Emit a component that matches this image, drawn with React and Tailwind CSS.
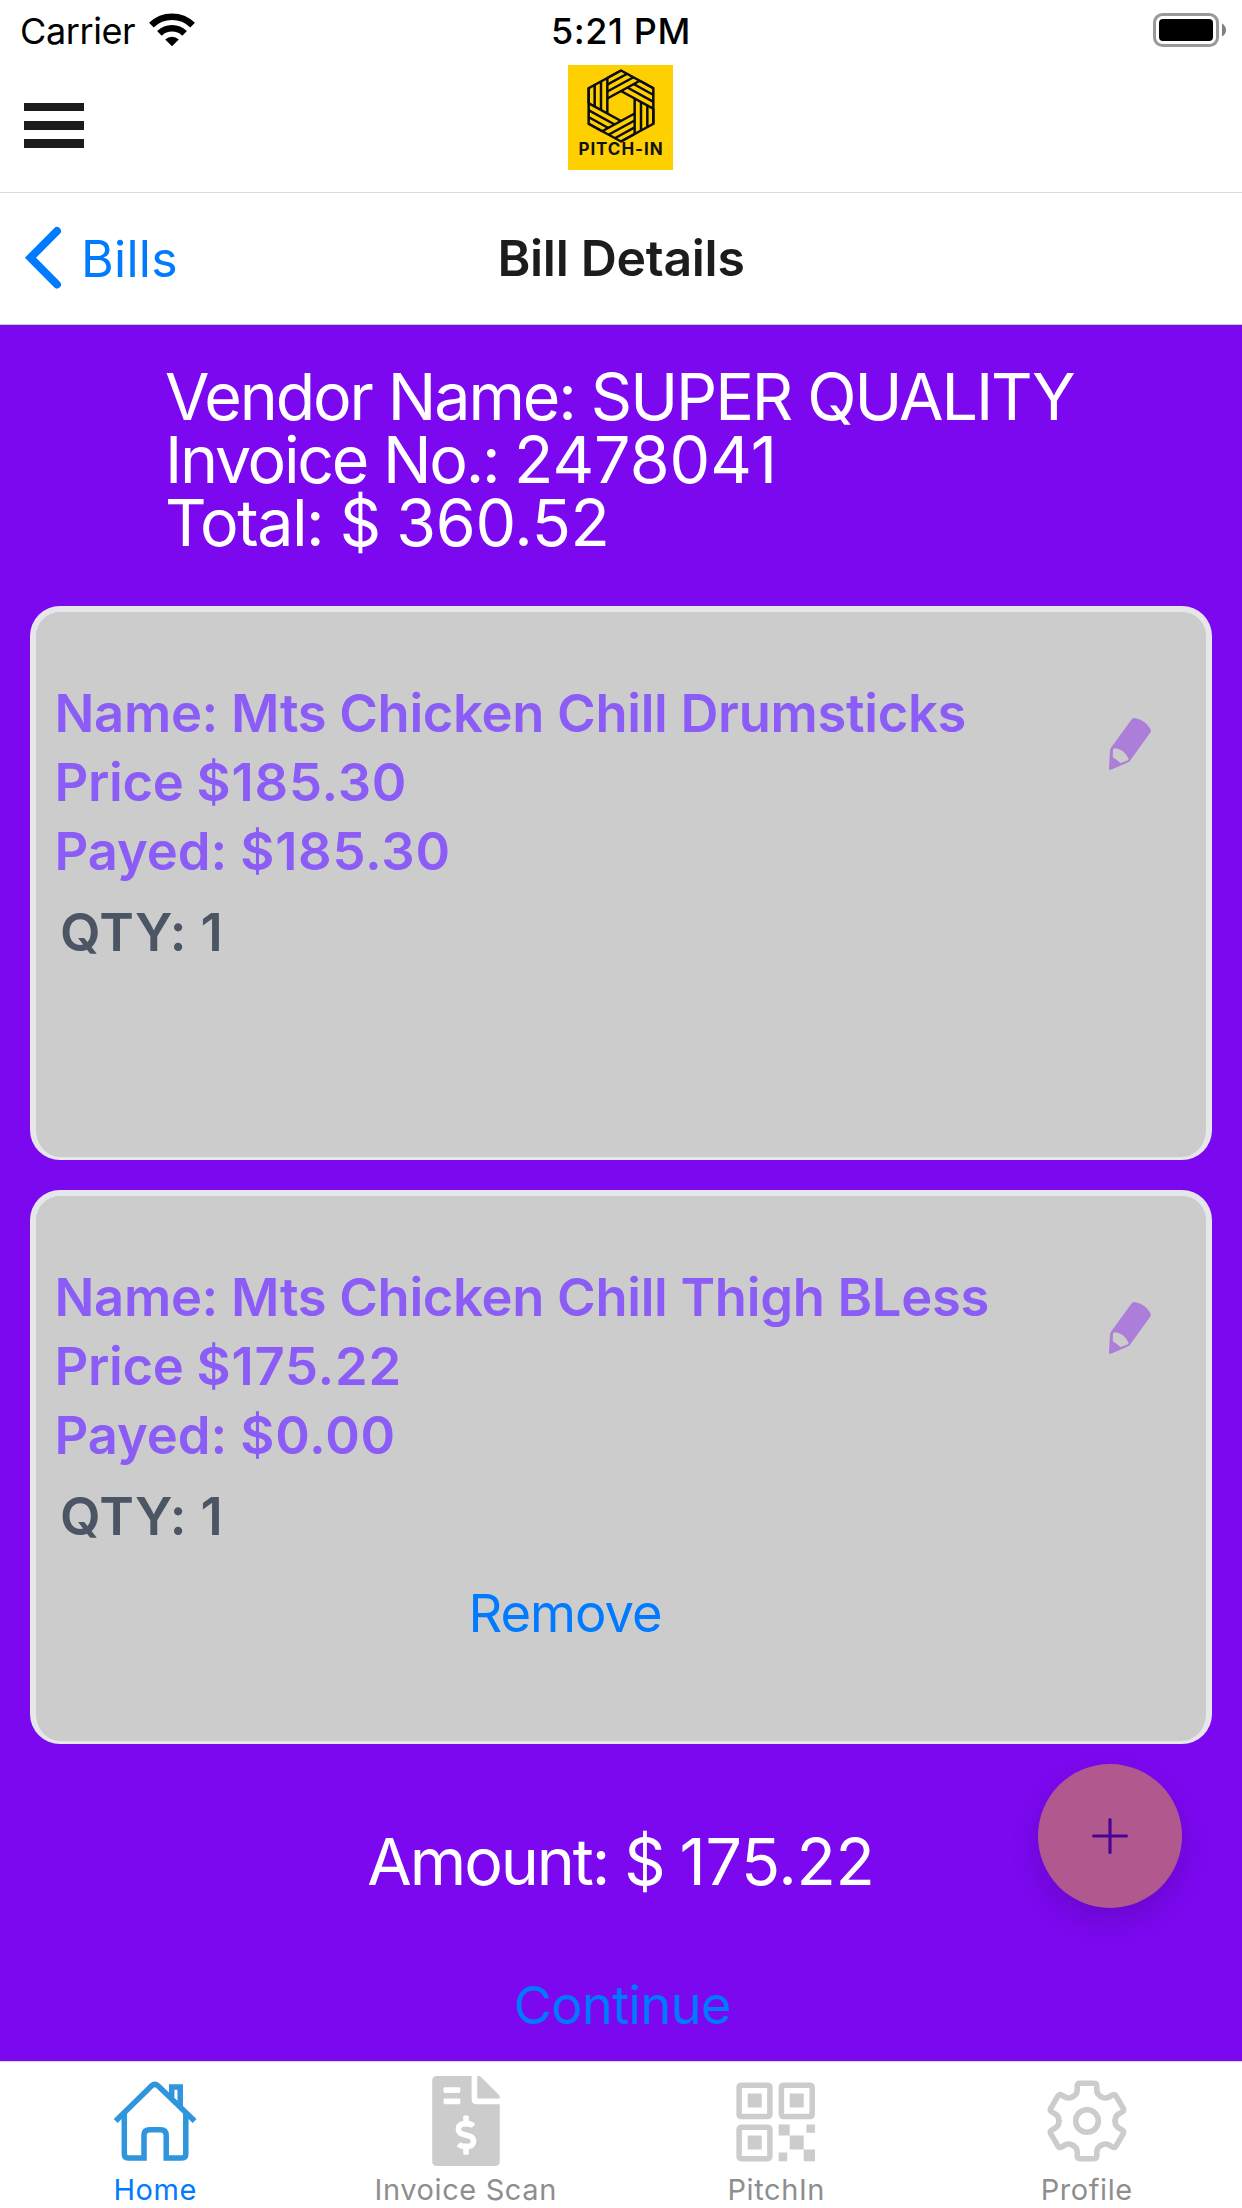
import { FaFileInvoiceDollar } from 'react-icons/fa';

const bills = [
  { name: 'Mts Chicken Chill Drumsticks', price: '185.30', payed: '185.30', qty: 1 },
  { name: 'Mts Chicken Chill Thigh BLess', price: '175.22', payed: '0.00', qty: 1, removable: true },
];

const angles = [0, 60, 120, 180, 240, 300];

const WifiIcon = () => (
  <svg className="w-[46px] h-[34px]" viewBox="0 0 46 34" fill="none" stroke="#000">
    <path d="M2.4 12.2 A29.5 29.5 0 0 1 43.6 12.2" strokeWidth="6.6" />
    <path d="M10.4 20.4 A18 18 0 0 1 35.6 20.4" strokeWidth="6.6" />
    <path d="M23 33.2 L16.2 26.6 A9.8 9.8 0 0 1 29.8 26.6 Z" fill="#000" stroke="none" />
  </svg>
);

const BatteryIcon = () => (
  <svg className="w-[74px] h-[34px]" viewBox="0 0 74 34">
    <rect x="1.5" y="1.5" width="63" height="31" rx="8" fill="none" stroke="#999" strokeWidth="3" />
    <rect x="6" y="6" width="54" height="22" rx="4" fill="#000" />
    <path d="M69 10.5 Q73 13 73 17 Q73 21 69 23.5 Z" fill="#808080" />
  </svg>
);

const Logo = () => (
  <div className="w-[105px] h-[105px] mr-[1px] bg-[#ffd000] flex flex-col items-center">
    <svg className="w-[68px] h-[74px] mt-[3.5px]" viewBox="-102 -111 204 222" fill="none" stroke="#0d0d0d" strokeWidth="7.5">
      <g transform="scale(1 0.95)">
        <path d="M0 -112 L97 -56 V56 L0 112 L-97 56 V-56 Z" />
        {angles.map((a) => (
          <path
            key={a}
            transform={`rotate(${a})`}
            d="M-79 -67 V1.7 M-60 -78 V12.7 M-41 -89 V23.7 M-97 -56 V-9"
          />
        ))}
      </g>
    </svg>
    <span className="font-bold text-[17px] leading-[17px] tracking-[0.95px] mt-[-1.5px] mr-[-1px] text-[#111] whitespace-nowrap">
      PITCH-IN
    </span>
  </div>
);

const PencilIcon = () => (
  <svg className="w-[44px] h-[54px]" viewBox="0 0 44 54">
    <path
      fill="#ad7dda"
      fillRule="evenodd"
      d="M23.5 2.5 Q25 0.8 27.5 1.2 Q37 3 42.4 12 Q43.4 13.8 42.4 15.5 L22.5 43 Q21.5 44.6 19.6 45.4 L3 52.8 Q1 53.4 1 51.5 L2 34 Q2 32 3.2 30.4 Z M5 33.2 Q5 31.2 7.2 31.3 Q15.5 32 20.4 41.2 Q21 42.8 19.4 43.6 L13.6 45.8 Q12.6 46.2 11.8 45.4 Q9.6 43.2 6 41.2 Q4.8 40.6 4.8 39.4 Z"
    />
  </svg>
);

const HomeIcon = () => (
  <svg className="w-[84px] h-[84px] mt-[2px] mr-[1px]" viewBox="113 2080 84 84" fill="none" stroke="#2f95dc" strokeWidth="5.5">
    <path d="M115.7 2121 L151.6 2085.8 Q154.8 2083 158 2085.8 L194.6 2121" />
    <path d="M124.3 2113 V2154 Q124.3 2157.9 128 2157.9 H144 V2135.5 Q144 2129.8 149.7 2129.8 H160.5 Q166.2 2129.8 166.2 2135.5 V2157.9 H182 Q185.8 2157.9 185.8 2154 V2113" />
    <path d="M171.7 2097 V2087.1 H180.2 V2108" />
  </svg>
);

const QrIcon = () => (
  <svg className="w-[80px] h-[80px] mt-[2px]" viewBox="736 2081.5 80 80" fill="#ccc">
    <g fill="none" stroke="#ccc" strokeWidth="5.5">
      <rect x="739.1" y="2084.7" width="30.8" height="31.4" rx="2" />
      <rect x="781.4" y="2084.7" width="30.8" height="31.4" rx="2" />
      <rect x="739.1" y="2126.8" width="30.8" height="31.4" rx="2" />
    </g>
    <rect x="747.7" y="2093" width="14" height="14" />
    <rect x="789.7" y="2093" width="14" height="14" />
    <rect x="747.7" y="2135" width="14" height="14" />
    <rect x="778.6" y="2124" width="11.1" height="11" />
    <rect x="789.7" y="2135" width="14" height="14" />
    <rect x="806.4" y="2124" width="8.6" height="8.3" />
    <rect x="803.7" y="2149" width="11.3" height="11.8" />
    <rect x="778.6" y="2152" width="8.6" height="8.8" />
  </svg>
);

const GearIcon = () => (
  <svg className="w-[84px] h-[84px]" viewBox="-42 -42 84 84" fill="none" stroke="#ccc" strokeWidth="5.6" strokeLinecap="round">
    <circle r="11.3" />
    {angles.map((a) => (
      <path
        key={a}
        transform={`rotate(${a})`}
        d="M-14.1 -24.4 L-13.2 -24.9 Q-9.8 -27 -9.8 -31 V-34.6 Q-9.8 -37.7 -7 -37.7 H7 Q9.8 -37.7 9.8 -34.6 V-31 Q9.8 -27 13.2 -24.9 L14.1 -24.4"
      />
    ))}
  </svg>
);

const BillCard = ({ bill }) => (
  <div className="h-[554px] mx-[30px] flex bg-[#ccc] border-[6px] border-b-[3px] border-[#e5e7eb] rounded-[30px]">
    <div className="w-[1060px] pt-[67px] text-[52.5px] leading-[69px]">
      <div className="pl-[18.5px] font-semibold text-[#8b5cf6] whitespace-nowrap">
        <p className="tracking-[-0.3px]">Name: {bill.name}</p>
        <p className="tracking-[-0.3px]">
          Price <span className="tracking-[0.8px]">${bill.price}</span>
        </p>
        <p className="tracking-[-0.1px]">
          Payed: <span className="tracking-[0.8px]">${bill.payed}</span>
        </p>
      </div>
      <p className="mt-[12px] pl-[24px] font-semibold tracking-[0.4px] text-[#4b5563]">QTY: {bill.qty}</p>
      {bill.removable && (
        <button className="block mx-auto mt-[28px] pr-[2px] tracking-[-1px] text-[#007aff]">Remove</button>
      )}
    </div>
    <div className="pt-[105px] pl-[12px]">
      <PencilIcon />
    </div>
  </div>
);

const Tab = ({ label, active, children }) => (
  <div className="flex-1 flex flex-col items-center">
    <div className="h-[110px] pt-[8px] flex items-center justify-center">{children}</div>
    <span
      className={`text-[29px] leading-[36px] tracking-[0.6px] ${active ? 'text-[#007aff]' : 'text-[#8e8e8f]'}`}
    >
      {label}
    </span>
  </div>
);

const App = () => {
  return (
    <div className="w-[1242px] h-[2208px] flex flex-col bg-white overflow-hidden font-['Inter',sans-serif]">
      <header className="h-[193px] border-b border-[#dcdcdc]">
        <div className="h-[65px] grid grid-cols-3 text-[36px] leading-[62px] text-black">
          <div className="flex pl-[20px]">
            <span className="w-[129px] tracking-[-0.4px]">Carrier</span>
            <div className="pt-[13px]">
              <WifiIcon />
            </div>
          </div>
          <span className="text-center font-medium tracking-[0.6px]">5:21 PM</span>
          <div className="flex justify-end pt-[13px] pr-[15px]">
            <BatteryIcon />
          </div>
        </div>
        <div className="grid grid-cols-3">
          <div className="flex flex-col gap-[9.7px] pl-[24px] pt-[37.7px]">
            <div className="w-[60px] h-[8.6px] bg-[#1c1c1e]" />
            <div className="w-[60px] h-[8.6px] bg-[#1c1c1e]" />
            <div className="w-[60px] h-[8.6px] bg-[#1c1c1e]" />
          </div>
          <div className="flex justify-center">
            <Logo />
          </div>
        </div>
      </header>

      <nav className="h-[132px] shrink-0 grid grid-cols-3 border-b border-[#c8c8c8] text-[50px] leading-[130px]">
        <div className="flex items-center pl-[24px] text-[#007aff]">
          <svg className="w-[38px] h-[64px] mb-[2px]" viewBox="0 0 38 64" fill="none" stroke="#007aff" strokeWidth="8" strokeLinecap="round">
            <path d="M33 5 L6.5 31.7 L33 58.5" />
          </svg>
          <span className="pl-[19px] tracking-[0.3px]">Bills</span>
        </div>
        <h1 className="text-center font-semibold tracking-[-0.3px] text-[#1c1c1e]">Bill Details</h1>
      </nav>

      <main className="relative h-[1736px] shrink-0 bg-[#7b08ef]">
        <div className="pt-[41px] pl-[165px] text-[64.5px] leading-[63px] text-white whitespace-nowrap">
          <p className="tracking-[-2.1px]">Vendor Name: SUPER QUALITY</p>
          <p className="tracking-[-2.3px]">
            Invoice No.: <span className="tracking-[0px]">2478041</span>
          </p>
          <p className="tracking-[-1.5px]">
            Total: $ <span className="tracking-[-0.3px]">360.52</span>
          </p>
        </div>
        <div className="mt-[51px] flex flex-col gap-[30px]">
          {bills.map((bill) => (
            <BillCard key={bill.name} bill={bill} />
          ))}
        </div>
        <p className="mt-[78px] text-center text-[64.5px] leading-[80px] tracking-[-2.1px] text-white">
          Amount: $ <span className="tracking-[-0.3px]">175.22</span>
        </p>
        <button className="block mx-auto mt-[73px] pl-[2px] text-[52.5px] leading-[60px] tracking-[-0.8px] text-[#007aff]">
          Continue
        </button>

        <button className="absolute right-[60px] bottom-[153px] w-[144px] h-[144px] rounded-full bg-[#b1588f] flex items-center justify-center shadow-[0_12px_30px_rgba(0,0,0,0.15)]">
          <svg className="w-[36px] h-[36px]" viewBox="0 0 36 36" stroke="#4b0492" strokeWidth="3.2" strokeLinecap="round">
            <path d="M18 1.6 V34.4 M1.6 18 H34.4" />
          </svg>
        </button>
      </main>

      <footer className="h-[147px] shrink-0 flex border-t border-[#d8d8d8]">
        <Tab label="Home" active>
          <HomeIcon />
        </Tab>
        <Tab label="Invoice Scan">
          <FaFileInvoiceDollar className="w-[68px] h-[90px] text-[#ccc]" />
        </Tab>
        <Tab label="PitchIn">
          <QrIcon />
        </Tab>
        <Tab label="Profile">
          <GearIcon />
        </Tab>
      </footer>
    </div>
  );
};

export default App;
